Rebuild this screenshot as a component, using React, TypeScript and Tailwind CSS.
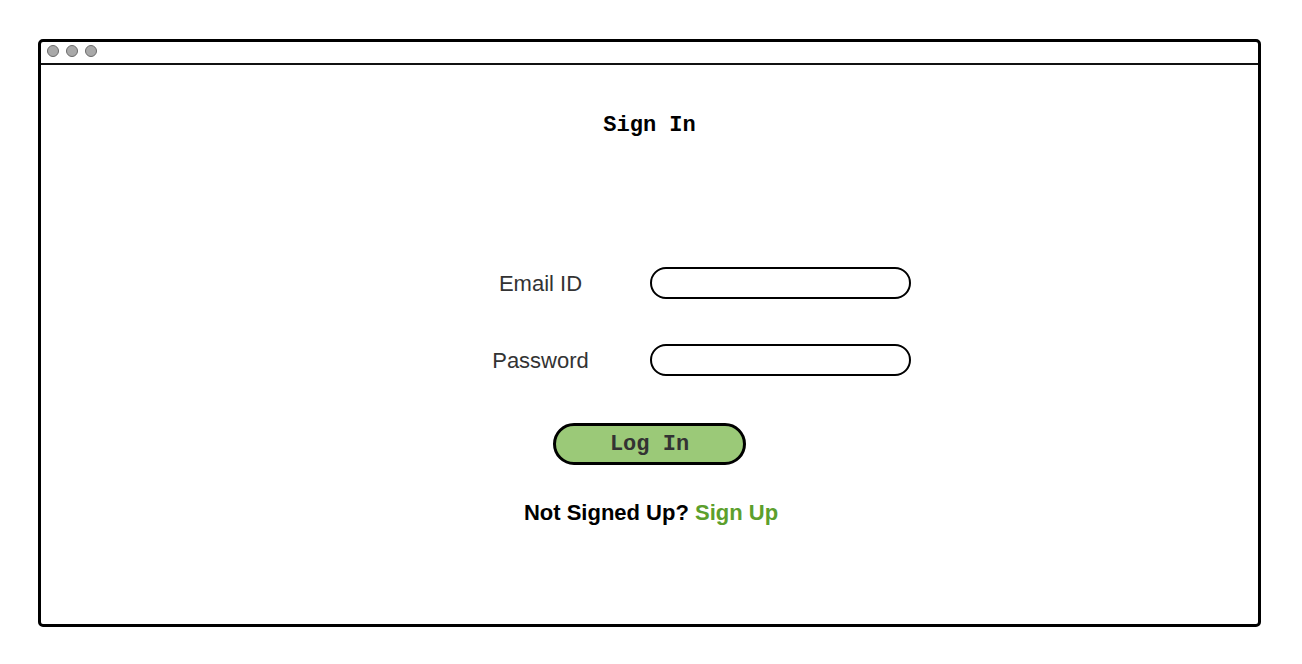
import React from "react";

const mono = { fontFamily: '"Liberation Mono", "DejaVu Sans Mono", monospace' };

const Field = ({ label }: { label: string }) => (
  <div className="flex w-full items-center h-[32px]">
    <div className="flex-1 flex justify-end">
      <div className="w-[120px] mr-[49px] mt-[2px] text-center text-[22px] leading-none text-[#333333]">
        {label}
      </div>
    </div>
    <div className="flex-1">
      <div className="w-[261px] h-[32px] rounded-full border-2 border-black bg-white" />
    </div>
  </div>
);

const App = () => {
  return (
    <div
      className="w-[1302px] h-[664px] bg-white pt-[39px] pl-[38px]"
      style={{ fontFamily: '"Liberation Sans", Arial, sans-serif' }}
    >
      <div className="w-[1223px] h-[588px] border-[3px] border-black rounded-[5px] flex flex-col">
        {/* title bar */}
        <div className="h-[23px] border-b-2 border-[#111] flex items-center gap-[7px] pl-[6px] pb-[3px]">
          <span className="w-[12px] h-[12px] rounded-full bg-[#a9a9a9] border border-[#6b6b6b]" />
          <span className="w-[12px] h-[12px] rounded-full bg-[#a9a9a9] border border-[#6b6b6b]" />
          <span className="w-[12px] h-[12px] rounded-full bg-[#a9a9a9] border border-[#6b6b6b]" />
        </div>

        <div className="flex-1 flex flex-col items-center">
          <h1 className="mt-[47px] text-[22px] leading-[28px] font-bold text-black" style={mono}>
            Sign In
          </h1>

          <div className="w-full mt-[127px] flex flex-col gap-[45px]">
            <Field label="Email ID" />
            <Field label="Password" />
          </div>

          <button
            className="mt-[47px] w-[193px] h-[42px] rounded-full border-[3px] border-black bg-[#9bc978] text-[22px] font-bold text-[#333333]"
            style={mono}
          >
            Log In
          </button>

          <p className="mt-[35px] ml-[3px] text-[22px] leading-[26px] font-bold text-black">
            Not Signed Up? <span className="text-[#5c9f2d]">Sign Up</span>
          </p>
        </div>
      </div>
    </div>
  );
};

export default App;
